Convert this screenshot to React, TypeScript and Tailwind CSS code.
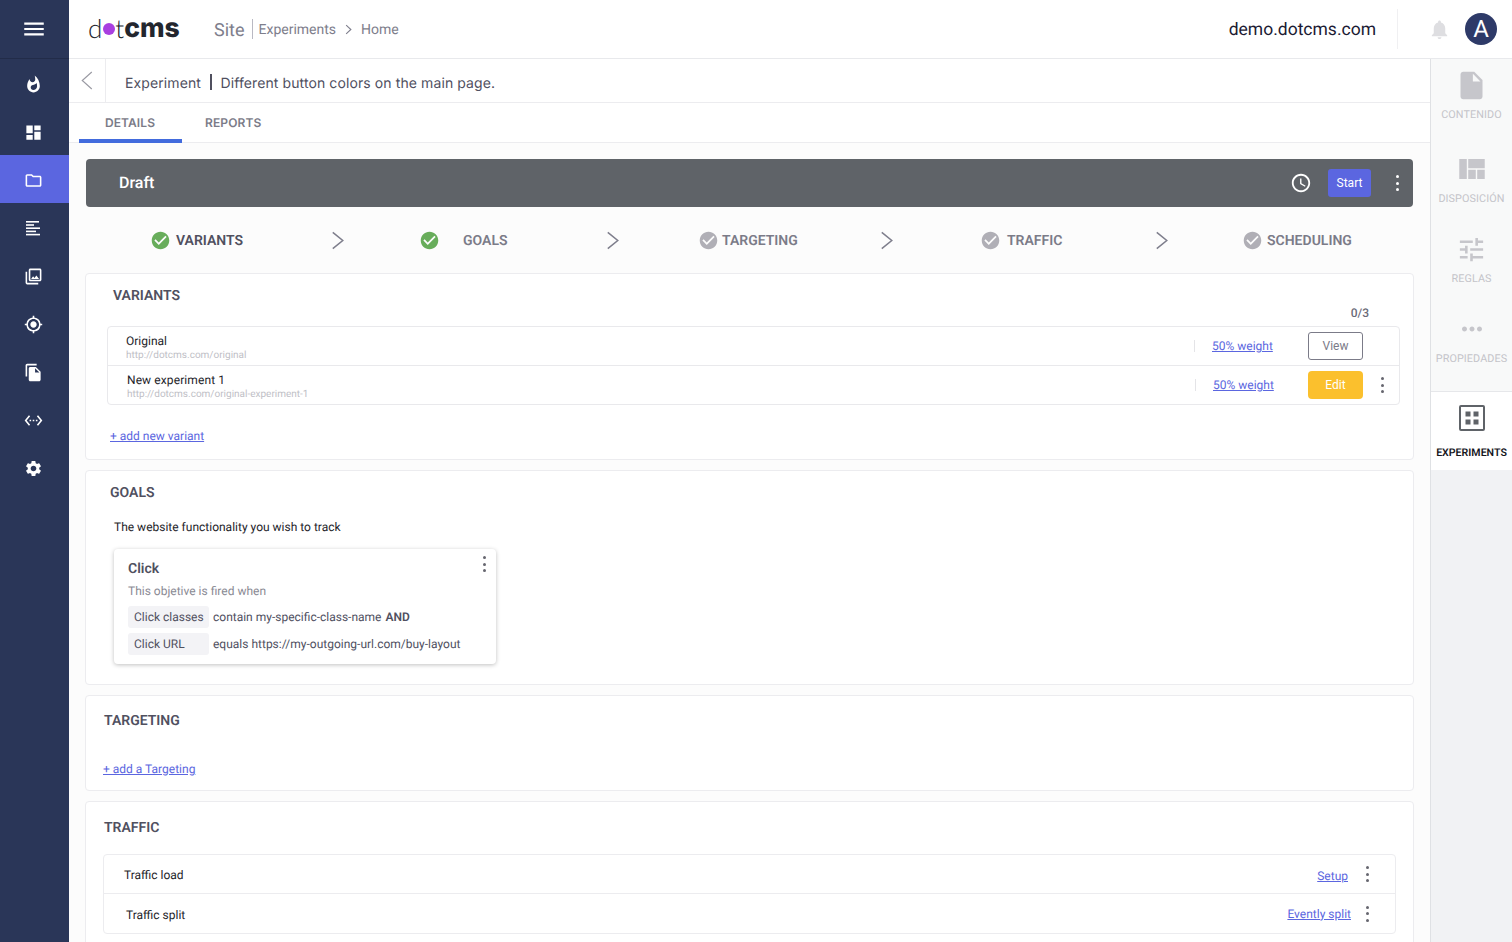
import {
  MdAccessTime,
  MdCheckCircle,
  MdDashboard,
  MdFileCopy,
  MdInsertDriveFile,
  MdMenu,
  MdMoreHoriz,
  MdMyLocation,
  MdNotifications,
  MdOutlineFolder,
  MdOutlinePhotoLibrary,
  MdSettings,
  MdSettingsEthernet,
  MdTune,
  MdViewQuilt,
  MdWhatshot,
} from "react-icons/md";

function LinesIcon() {
  return (
    <svg viewBox="0 0 14 15" className="h-[15px] w-[14px] fill-white">
      <rect x="0" y="0" width="13" height="1.6" />
      <rect x="0" y="3.2" width="8" height="1.6" />
      <rect x="0" y="6.4" width="14" height="1.6" />
      <rect x="0" y="9.6" width="10" height="1.6" />
      <rect x="0" y="12.8" width="14" height="1.6" />
    </svg>
  );
}

const navItems = [
  { icon: <MdWhatshot />, active: false },
  { icon: <MdDashboard />, active: false },
  { icon: <MdOutlineFolder />, active: true },
  { icon: <LinesIcon />, active: false },
  { icon: <MdOutlinePhotoLibrary />, active: false },
  { icon: <MdMyLocation />, active: false },
  { icon: <MdFileCopy />, active: false },
  { icon: <MdSettingsEthernet />, active: false },
  { icon: <MdSettings />, active: false },
];

function Sidebar() {
  return (
    <aside className="flex w-[69px] shrink-0 flex-col bg-[#2a3658] text-white">
      <div className="flex h-[59px] items-center justify-center border-b border-[#222c49] pr-[2px] text-[26px]">
        <MdMenu />
      </div>
      <nav className="flex flex-col">
        {navItems.map((item, i) => (
          <div
            key={i}
            className={
              item.active
                ? "flex h-[48px] items-center justify-center bg-[#5b66e0] pt-[2px] pr-[3px] text-[19px]"
                : "flex h-[48px] items-center justify-center pt-[2px] pr-[3px] text-[19px]"
            }
          >
            {item.icon}
          </div>
        ))}
      </nav>
    </aside>
  );
}

function Header() {
  return (
    <header className="flex h-[59px] shrink-0 items-center border-b border-[#e8e9ec] bg-white pr-[15px] pl-[19px]">
      <div className="flex w-[126px] items-center pb-[2px] text-[26px] leading-none text-[#23262e]">
        <span className="font-[Lato,sans-serif] font-light">d</span>
        <span className="mx-[0.5px] inline-block h-[12px] w-[12px] translate-y-[1px] rounded-full bg-[#a93fe0]" />
        <span className="font-[Lato,sans-serif] font-light">t</span>
        <span className="font-[Inter,sans-serif] text-[26.5px] font-extrabold">cms</span>
      </div>
      <span className="pt-[2px] text-[18px] text-[#7e7e8c]">Site</span>
      <span className="mr-[6px] ml-[7px] h-[20px] w-px bg-[#b9b9c3]" />
      <span className="pt-[2px] text-[14px] text-[#7e7e8c]">Experiments</span>
      <svg viewBox="0 0 10 14" className="mx-[8px] h-[11px] w-[9px] fill-none stroke-[#7e7e8c] stroke-[1.4]">
        <path d="M2 1.5 8 7l-6 5.5" />
      </svg>
      <span className="pt-[2px] text-[14px] text-[#7e7e8c]">Home</span>
      <span className="ml-auto pt-[2px] text-[17.5px] text-[#1c1b33]">demo.dotcms.com</span>
      <span className="mr-[30px] ml-[21px] h-[40px] w-px bg-[#f0f0f2]" />
      <MdNotifications className="text-[23px] text-[#dedee1]" />
      <div className="ml-[14px] flex h-[32px] w-[32px] items-center justify-center rounded-full bg-[#2e3a68] text-[24px] text-white">
        A
      </div>
    </header>
  );
}

function StatusBar() {
  return (
    <div className="mx-[7px] mt-[16px] flex h-[48px] items-center rounded-[4px] bg-[#5f6368] pr-[14px] pl-[33px] text-white">
      <span className="text-[16px] font-medium">Draft</span>
      <MdAccessTime className="mr-[16px] ml-auto text-[22px]" />
      <button className="h-[28px] w-[43px] rounded-[3px] bg-[#5b66e0] text-[12px]">Start</button>
      <Dots className="ml-[25px] text-white" />
    </div>
  );
}

function Dots({ className = "" }: { className?: string }) {
  return (
    <span className={`flex h-[16px] w-[3px] flex-col justify-between ${className}`}>
      <i className="h-[3px] w-[3px] rounded-full bg-current" />
      <i className="h-[3px] w-[3px] rounded-full bg-current" />
      <i className="h-[3px] w-[3px] rounded-full bg-current" />
    </span>
  );
}

function Chevron() {
  return (
    <svg viewBox="0 0 14 20" className="h-[19px] w-[14px] fill-none stroke-[#7e7e8c] stroke-[1.6]">
      <path d="M1.5 1.5 12 10 1.5 18.5" />
    </svg>
  );
}

const steps = [
  { label: "VARIANTS", color: "text-[#68ad5b]", text: "ml-[5px] w-[155px] text-[#50505f]", after: "mr-[74px]" },
  { label: "GOALS", color: "text-[#68ad5b]", text: "ml-[23px] w-[143px] text-[#7b7b88]", after: "mr-[78px]" },
  { label: "TARGETING", color: "text-[#b0afb6]", text: "ml-[3px] w-[158px] text-[#7b7b88]", after: "mr-[86px]" },
  { label: "TRAFFIC", color: "text-[#b0afb6]", text: "ml-[6px] w-[148px] text-[#7b7b88]", after: "mr-[73px]" },
  { label: "SCHEDULING", color: "text-[#b0afb6]", text: "ml-[4px] text-[#7b7b88]", after: "" },
];

function Steps() {
  return (
    <div className="flex h-[66px] items-center pl-[71px]">
      {steps.map((step, i) => (
        <div key={step.label} className="flex items-center">
          <MdCheckCircle className={`text-[21px] ${step.color}`} />
          <span className={`pt-[2px] text-[14px] font-semibold ${step.text}`}>{step.label}</span>
          {i < steps.length - 1 && (
            <span className={step.after}>
              <Chevron />
            </span>
          )}
        </div>
      ))}
    </div>
  );
}

function Card({ className, children }: { className: string; children: React.ReactNode }) {
  return (
    <section className={`mx-[6px] mb-[10px] rounded-[4px] border border-[#ececef] bg-white ${className}`}>
      {children}
    </section>
  );
}

function Heading({ className, children }: { className: string; children: React.ReactNode }) {
  return <h3 className={`text-[14px] leading-[22px] font-semibold text-[#50505f] ${className}`}>{children}</h3>;
}

function TextLink({ className = "", children }: { className?: string; children: React.ReactNode }) {
  return <a className={`text-[12px] text-[#5b66e0] underline ${className}`}>{children}</a>;
}

function VariantsCard() {
  return (
    <Card className="h-[187px] pt-[11px]">
      <Heading className="ml-[27px]">VARIANTS</Heading>
      <div className="-mt-[3px] pr-[44px] text-right text-[12px] leading-[18px] font-medium text-[#6b6b78]">0/3</div>
      <div className="mt-[4px] mr-[13px] ml-[21px] rounded-[4px] border border-[#e9e9ec]">
        <div className="flex h-[39px] items-center border-b border-[#e9e9ec] pl-[18px]">
          <div className="flex-1 pt-[4px]">
            <div className="text-[12px] leading-[14px] text-[#1e1e2a]">Original</div>
            <div className="mt-[1px] text-[10px] leading-[13px] text-[#c0c0c6]">http://dotcms.com/original</div>
          </div>
          <span className="h-[12px] w-px bg-[#e4e4e7]" />
          <TextLink className="ml-[17px] w-[96px]">50% weight</TextLink>
          <button className="h-[28px] w-[55px] rounded-[3px] border border-[#7b7b88] text-[12px] text-[#7b7b88]">View</button>
          <span className="w-[36px]" />
        </div>
        <div className="flex h-[38px] items-center pl-[19px]">
          <div className="flex-1 pt-[4px]">
            <div className="text-[12px] leading-[14px] tracking-[0.1px] text-[#1e1e2a]">New experiment 1</div>
            <div className="mt-[1px] text-[10px] leading-[13px] text-[#c0c0c6]">http://dotcms.com/original-experiment-1</div>
          </div>
          <span className="h-[12px] w-px bg-[#e4e4e7]" />
          <TextLink className="ml-[17px] w-[95px]">50% weight</TextLink>
          <button className="h-[28px] w-[55px] rounded-[4px] bg-[#fbc02d] text-[12px] text-white">Edit</button>
          <span className="flex w-[36px] justify-center pl-[2px]">
            <Dots className="text-[#66666f]" />
          </span>
        </div>
      </div>
      <TextLink className="mt-[23px] ml-[24px] block leading-[16px]">+ add new variant</TextLink>
    </Card>
  );
}

function GoalsCard() {
  return (
    <Card className="h-[215px] pt-[11px]">
      <Heading className="ml-[24px]">GOALS</Heading>
      <p className="mt-[14px] ml-[28px] text-[12px] leading-[18px] text-[#1e1e2a]">The website functionality you wish to track</p>
      <div className="relative mt-[13px] ml-[28px] h-[115px] w-[382px] rounded-[4px] bg-white pt-[9px] pl-[14px] shadow-[0_1px_4px_rgba(0,0,0,0.25)]">
        <Dots className="absolute top-[7px] right-[10px] h-[14px] text-[#66666f]" />
        <div className="text-[14px] leading-[22px] font-semibold text-[#50505f]">Click</div>
        <div className="mt-[2px] text-[12px] leading-[18px] text-[#8a8a94]">This objetive is fired when</div>
        <div className="mt-[6px] flex items-center text-[12px] text-[#50505f]">
          <span className="flex h-[22px] w-[81px] items-center rounded-[3px] bg-[#f3f3f6] pl-[6px]">Click classes</span>
          <span className="ml-[4px]">contain my-specific-class-name</span>
          <b className="ml-[4px] font-semibold">AND</b>
        </div>
        <div className="mt-[5px] flex items-center text-[12px] text-[#50505f]">
          <span className="flex h-[22px] w-[81px] items-center rounded-[3px] bg-[#f3f3f6] pl-[6px]">Click URL</span>
          <span className="ml-[4px]">equals https://my-outgoing-url.com/buy-layout</span>
        </div>
      </div>
    </Card>
  );
}

function TargetingCard() {
  return (
    <Card className="h-[96px] pt-[14px]">
      <Heading className="ml-[18px]">TARGETING</Heading>
      <TextLink className="mt-[29px] ml-[17px] block leading-[16px]">+ add a Targeting</TextLink>
    </Card>
  );
}

function TrafficCard() {
  return (
    <Card className="h-[160px] pt-[15px]">
      <Heading className="ml-[18px]">TRAFFIC</Heading>
      <div className="mt-[15px] mr-[17px] ml-[17px] rounded-[4px] border border-[#ececef]">
        <div className="flex h-[39px] items-center border-b border-[#ececef] pr-[26px] pl-[20px] text-[12px] text-[#1e1e2a]">
          <span className="flex-1 pt-[2px]">Traffic load</span>
          <TextLink className="mr-[18px] pt-[3px]">Setup</TextLink>
          <Dots className="text-[#66666f]" />
        </div>
        <div className="flex h-[39px] items-center pr-[26px] pl-[22px] text-[12px] text-[#1e1e2a]">
          <span className="flex-1 pt-[2px]">Traffic split</span>
          <TextLink className="mr-[15px]">Evently split</TextLink>
          <Dots className="text-[#66666f]" />
        </div>
      </div>
    </Card>
  );
}

const railItems = [
  { label: "CONTENIDO", icon: <MdInsertDriveFile className="text-[33px]" />, height: "h-[84px] pt-[9px]" },
  { label: "DISPOSICIÓN", icon: <MdViewQuilt className="text-[34px]" />, height: "h-[80px] pt-[9px]" },
  { label: "REGLAS", icon: <MdTune className="text-[31px]" />, height: "h-[80px] pt-[9px]" },
  { label: "PROPIEDADES", icon: <MdMoreHoriz className="text-[30px]" />, height: "h-[80px] pt-[9px]" },
];

function RightRail() {
  return (
    <aside className="flex w-[82px] shrink-0 flex-col border-l border-[#dfe1e4] bg-[#f1f2f4]">
      <div className="h-[332px] bg-[#f8f9f9]">
        {railItems.map((item) => (
          <div key={item.label} className={`flex flex-col items-center text-[#c6c6cb] ${item.height}`}>
            <div className="flex h-[34px] items-center">{item.icon}</div>
            <span className="mt-[5px] text-[10.8px] tracking-[0.1px] text-[#c4c4c9]">{item.label}</span>
          </div>
        ))}
      </div>
      <div className="flex h-[79px] flex-col items-center border-t border-[#e6e7ea] bg-white pt-[12px]">
        <svg viewBox="0 0 28 28" className="h-[28px] w-[28px] fill-[#5f6368]">
          <path fillRule="evenodd" d="M3 1h22a2 2 0 0 1 2 2v22a2 2 0 0 1-2 2H3a2 2 0 0 1-2-2V3a2 2 0 0 1 2-2Zm0 2v22h22V3H3Zm4.5 4.5h5v5h-5v-5Zm8 0h5v5h-5v-5Zm-8 8h5v5h-5v-5Zm8 0h5v5h-5v-5Z" />
        </svg>
        <span className="mt-[13px] text-[10.6px] font-semibold text-[#16161d]">EXPERIMENTS</span>
      </div>
    </aside>
  );
}

export default function App() {
  return (
    <div className="flex h-[942px] overflow-hidden bg-white font-[Roboto,sans-serif] [text-rendering:geometricPrecision]">
      <Sidebar />
      <div className="flex min-w-0 flex-1 flex-col">
        <Header />
        <div className="flex min-h-0 flex-1">
          <main className="min-w-0 flex-1 bg-[#fcfcfc] px-[10px]">
            <div className="-mx-[10px] flex h-[44px] items-center border-b border-[#ececef] bg-white font-[Inter,sans-serif] text-[14px] tracking-[0.1px] text-[#50505f]">
              <div className="flex h-full w-[37px] items-center justify-center border-r border-[#ececef] pr-[2px] pb-[1px]">
                <svg viewBox="0 0 12 18" className="h-[19px] w-[13px] fill-none stroke-[#9a9aa3] stroke-[1.1]">
                  <path d="M11 1 2 9l9 8" />
                </svg>
              </div>
              <span className="ml-[19px] pt-[5px]">Experiment</span>
              <span className="mt-[3px] mr-[8.5px] ml-[9.5px] h-[16px] w-[1.5px] bg-[#50505f]" />
              <span className="pt-[5px]">Different button colors on the main page.</span>
            </div>
            <div className="-mx-[10px] flex h-[40px] border-b border-[#ececef] bg-white pl-[10px] font-[Inter,sans-serif] text-[12px] font-semibold tracking-[0.1px] text-[#7b7b88]">
              <div className="flex h-[40px] w-[103px] items-center justify-center border-b-4 border-[#426bdd] pt-[4px] pr-[1px]">DETAILS</div>
              <div className="ml-[23px] flex h-[40px] items-center">REPORTS</div>
            </div>
            <StatusBar />
            <Steps />
            <VariantsCard />
            <GoalsCard />
            <TargetingCard />
            <TrafficCard />
          </main>
          <RightRail />
        </div>
      </div>
    </div>
  );
}
